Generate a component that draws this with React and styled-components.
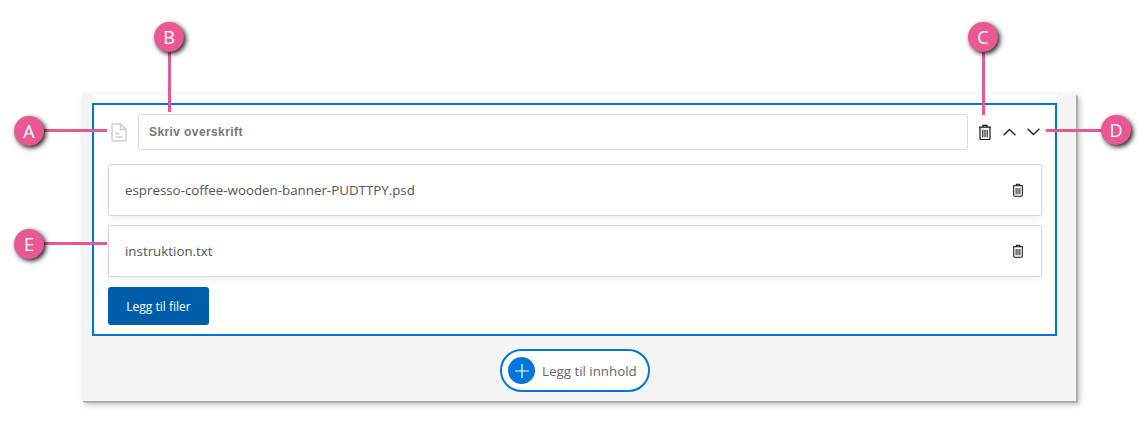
import styled, { createGlobalStyle } from "styled-components";

const files = ["espresso-coffee-wooden-banner-PUDTTPY.psd", "instruktion.txt"];

const callouts = [
  { id: "A", x: 29, y: 131, line: { x: 42, y: 129, w: 65, h: 3 } },
  { id: "B", x: 169, y: 37, line: { x: 168, y: 50, w: 3, h: 62 } },
  { id: "C", x: 983, y: 37, line: { x: 982, y: 50, w: 3, h: 65 } },
  { id: "D", x: 1116, y: 130, line: { x: 1046, y: 129, w: 56, h: 3 } },
  { id: "E", x: 29, y: 244, line: { x: 42, y: 242, w: 65, h: 3 } },
];

function TrashIcon({ size }) {
  return (
    <svg width={size} height={size * 1.17} viewBox="0 0 14 16" fill="none" stroke="#111" strokeWidth="1.2">
      <path d="M1 3h12M5 3V1.2h4V3" />
      <path d="M2 3.4v10.8c0 .6.5 1.1 1.1 1.1h7.8c.6 0 1.1-.5 1.1-1.1V3.4" />
      <path d="M4.8 5.6v7.4M7 5.6v7.4M9.2 5.6v7.4" strokeWidth="1.1" />
    </svg>
  );
}

function DocIcon() {
  return (
    <svg width="16" height="19" viewBox="0 0 16 19" fill="none" stroke="#cfcfcf" strokeWidth="1.5">
      <path d="M2.5 1h7l5.5 5.5v10a1.5 1.5 0 0 1-1.5 1.5h-11A1.5 1.5 0 0 1 1 16.500v-14A1.5 1.5 0 0 1 2.500 1z" />
      <path d="M9.500 1v5.500H15M4.500 10.500h4M4.500 14h7" />
    </svg>
  );
}

function Chevron({ up }) {
  return (
    <svg width="13" height="8" viewBox="0 0 13 8" fill="none" stroke="#222" strokeWidth="1.4">
      <path d={up ? "M.6 7.200 6.500 1.500l5.900 5.700" : "M.6 .8 6.500 6.500 12.400 .8"} />
    </svg>
  );
}

export default function App() {
  return (
    <>
      <GlobalStyle />
      <Page>
        <Panel>
          <Selection>
            <HeaderRow>
              <DocSlot>
                <DocIcon />
              </DocSlot>
              <TitleInput placeholder="Skriv overskrift" />
              <IconRow>
                <TrashIcon size={14} />
                <Chevron up />
                <Chevron />
              </IconRow>
            </HeaderRow>
            <FileList>
              {files.map((name) => (
                <FileCard key={name}>
                  <span>{name}</span>
                  <TrashIcon size={12} />
                </FileCard>
              ))}
            </FileList>
            <AddFiles>Legg til filer</AddFiles>
          </Selection>
          <AddRow>
            <AddContent>
              <PlusDot>
                <svg width="14" height="14" viewBox="0 0 14 14" stroke="#fff" strokeWidth="1.2">
                  <path d="M7 0v14M0 7h14" />
                </svg>
              </PlusDot>
              Legg til innhold
            </AddContent>
          </AddRow>
        </Panel>
        {callouts.map((c) => (
          <span key={c.id}>
            <Leader $x={c.line.x} $y={c.line.y} $w={c.line.w} $h={c.line.h} />
            <Bubble $x={c.x} $y={c.y}>{c.id}</Bubble>
          </span>
        ))}
      </Page>
    </>
  );
}

const GlobalStyle = createGlobalStyle`
  * {
    margin: 0;
    padding: 0;
    box-sizing: border-box;
  }

  body {
    background-color: #fff;
    color: #555;
    font-family: "Open Sans", "Liberation Sans", sans-serif;
    overflow: hidden;
  }
`;

const Page = styled.div`
  position: relative;
  width: 1145px;
  height: 437px;
  padding: 94px 0 0 82px;
`;

const Panel = styled.div`
  width: 994px;
  height: 307px;
  padding: 9px 19px 0 10px;
  background: #f4f4f4;
  box-shadow: 1px 1px 0 #aaa, 2px 2px 0 #b4b4b4, 3px 3px 6px rgba(0, 0, 0, 0.3);
`;

const Selection = styled.div`
  width: 965px;
  height: 233px;
  padding: 9px 14px 0 14px;
  background: #fff;
  border: 2px solid #0077d8;
  box-shadow: 0 -9px 0 #fdfdfd;
`;

const HeaderRow = styled.div`
  display: flex;
  align-items: center;
  height: 36px;
`;

const DocSlot = styled.div`
  display: flex;
  flex: none;
  width: 30px;
  padding-left: 3px;
`;

const TitleInput = styled.input`
  flex: none;
  width: 830px;
  height: 36px;
  padding: 0 10px;
  border: 1px solid #d9d9d9;
  border-radius: 3px;
  outline: none;
  font: bold 12px "Liberation Sans", sans-serif;
  letter-spacing: 0.4px;

  &::placeholder {
    color: #777;
    opacity: 1;
  }
`;

const IconRow = styled.div`
  display: flex;
  flex: none;
  align-items: center;
  gap: 11px;
  margin-left: 10px;
`;

const FileList = styled.div`
  display: flex;
  flex-direction: column;
  gap: 9px;
  margin-top: 14px;
`;

const FileCard = styled.div`
  display: flex;
  align-items: center;
  justify-content: space-between;
  width: 934px;
  height: 52px;
  padding: 0 17px 0 16px;
  border: 1px solid #d9d9d9;
  border-radius: 2px;
  box-shadow: 0 3px 8px rgba(0, 0, 0, 0.06);
  font-size: 13.33px;
  color: #555;
`;

const AddFiles = styled.button`
  display: block;
  width: 101px;
  height: 38px;
  margin-top: 10px;
  border: none;
  border-radius: 3px;
  background: #005ea8;
  color: #fff;
  font: 500 12px "Open Sans", sans-serif;
`;

const AddRow = styled.div`
  display: flex;
  justify-content: center;
  margin-top: 13px;
  padding-left: 1px;
`;

const AddContent = styled.button`
  display: flex;
  align-items: center;
  gap: 7px;
  width: 150px;
  height: 43px;
  padding-left: 6px;
  border: 2px solid #0077d8;
  border-radius: 22px;
  background: #fff;
  color: #666;
  font: 400 13.33px "Open Sans", sans-serif;
`;

const PlusDot = styled.span`
  display: flex;
  align-items: center;
  justify-content: center;
  width: 27px;
  height: 27px;
  border-radius: 50%;
  background: #0077d8;
`;

const Leader = styled.i`
  position: absolute;
  left: ${(p) => p.$x}px;
  top: ${(p) => p.$y}px;
  width: ${(p) => p.$w}px;
  height: ${(p) => p.$h}px;
  background: #e85893;
`;

const Bubble = styled.b`
  position: absolute;
  left: ${(p) => p.$x - 15}px;
  top: ${(p) => p.$y - 15}px;
  width: 30px;
  height: 30px;
  border-radius: 50%;
  background: #e85893;
  box-shadow: 2px 2px 5px rgba(0, 0, 0, 0.9);
  color: #fff;
  font: 400 18px/30px "Open Sans", sans-serif;
  text-align: center;
`;
